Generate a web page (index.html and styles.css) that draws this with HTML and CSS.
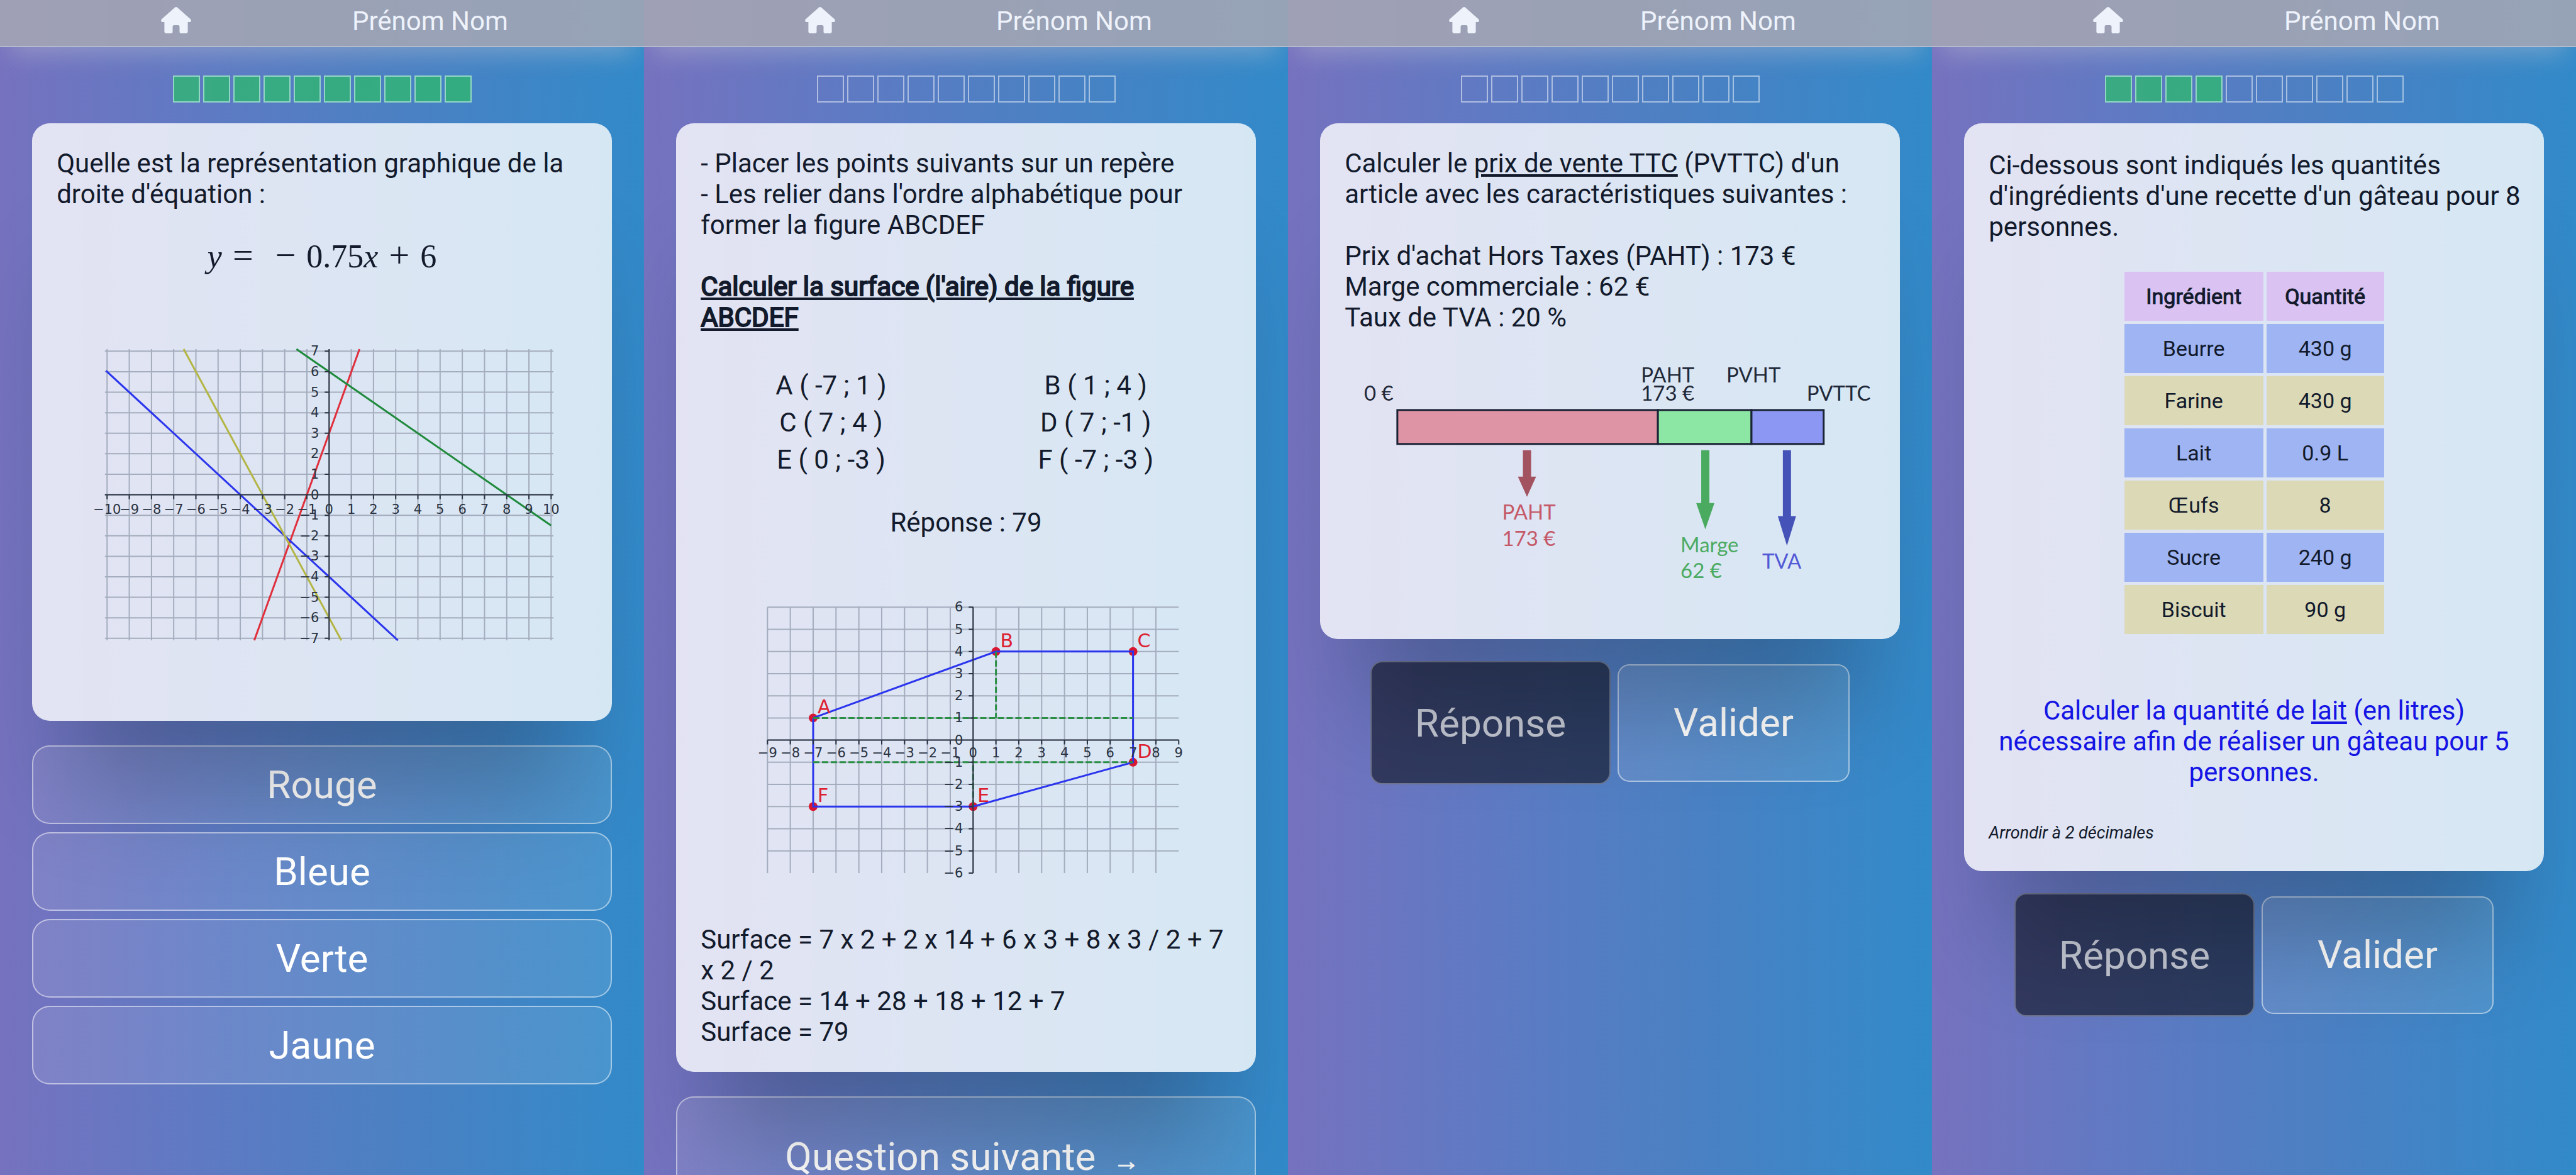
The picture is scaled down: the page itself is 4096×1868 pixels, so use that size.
FILE: index.html
```
<!DOCTYPE html>
<html lang="fr">
<head>
<meta charset="utf-8">
<title>Exercices de mathématiques</title>
<link rel="stylesheet" href="styles.css">
</head>
<body>
<main class="screens">

<section class="screen">
  <header class="topbar">
    <a class="home" href="#" aria-label="Accueil"><svg viewBox="0 0 48 42"><path d="M22.2 .8 Q24 -.6 25.8 .8 L47 19.4 Q49 22 46.5 24 L42.600 24 V39 Q42.600 42 39.600 42 H32 Q29.500 42 29.500 39.500 V31.500 Q29.500 29 27 29 H21 Q18.500 29 18.500 31.500 V39.500 Q18.500 42 16 42 H8.400 Q5.400 42 5.400 39 V24 L1.500 24 Q-1 22 1 19.400 Z"/></svg></a>
    <span class="user">Prénom Nom</span>
  </header>
  <ol class="progress" aria-label="Progression"><li class="done"></li><li class="done"></li><li class="done"></li><li class="done"></li><li class="done"></li><li class="done"></li><li class="done"></li><li class="done"></li><li class="done"></li><li class="done"></li></ol>
  <article class="card">
    <p>Quelle est la représentation graphique de la droite d'équation :</p>
    <div class="formula"><i>y</i><b>=</b><b class="minus">−</b><span>0.75<i>x</i></span><b>+</b><span>6</span></div>
    <svg class="plot plot-lines" id="plot1" viewBox="90 530 845 500" role="img" aria-label="Quatre droites"></svg>
  </article>
  <div class="choices">
    <button class="glass">Rouge</button>
    <button class="glass">Bleue</button>
    <button class="glass">Verte</button>
    <button class="glass">Jaune</button>
  </div>
</section>

<section class="screen">
  <header class="topbar">
    <a class="home" href="#" aria-label="Accueil"><svg viewBox="0 0 48 42"><path d="M22.2 .8 Q24 -.6 25.8 .8 L47 19.4 Q49 22 46.5 24 L42.600 24 V39 Q42.600 42 39.600 42 H32 Q29.500 42 29.500 39.500 V31.500 Q29.500 29 27 29 H21 Q18.500 29 18.500 31.500 V39.500 Q18.500 42 16 42 H8.400 Q5.400 42 5.400 39 V24 L1.500 24 Q-1 22 1 19.400 Z"/></svg></a>
    <span class="user">Prénom Nom</span>
  </header>
  <ol class="progress" aria-label="Progression"><li></li><li></li><li></li><li></li><li></li><li></li><li></li><li></li><li></li><li></li></ol>
  <article class="card">
    <p>- Placer les points suivants sur un repère<br>- Les relier dans l'ordre alphabétique pour former la figure ABCDEF</p>
    <p class="task">Calculer la surface (l'aire) de la figure ABCDEF</p>
    <table class="points">
      <tr><td>A ( -7 ; 1 )</td><td>B ( 1 ; 4 )</td></tr>
      <tr><td>C ( 7 ; 4 )</td><td>D ( 7 ; -1 )</td></tr>
      <tr><td>E ( 0 ; -3 )</td><td>F ( -7 ; -3 )</td></tr>
    </table>
    <p class="result">Réponse : 79</p>
    <svg class="plot plot-figure" id="plot2" viewBox="90 940 845 460" role="img" aria-label="Figure ABCDEF"></svg>
    <p>Surface = 7 x 2 + 2 x 14 + 6 x 3 + 8 x 3 / 2 + 7 x 2 / 2<br>Surface = 14 + 28 + 18 + 12 + 7<br>Surface = 79</p>
  </article>
  <div class="choices">
    <button class="glass next">Question suivante <span class="arrow">→</span></button>
  </div>
</section>

<section class="screen">
  <header class="topbar">
    <a class="home" href="#" aria-label="Accueil"><svg viewBox="0 0 48 42"><path d="M22.2 .8 Q24 -.6 25.8 .8 L47 19.4 Q49 22 46.5 24 L42.600 24 V39 Q42.600 42 39.600 42 H32 Q29.500 42 29.500 39.500 V31.500 Q29.500 29 27 29 H21 Q18.500 29 18.500 31.500 V39.500 Q18.500 42 16 42 H8.400 Q5.400 42 5.400 39 V24 L1.500 24 Q-1 22 1 19.400 Z"/></svg></a>
    <span class="user">Prénom Nom</span>
  </header>
  <ol class="progress" aria-label="Progression"><li></li><li></li><li></li><li></li><li></li><li></li><li></li><li></li><li></li><li></li></ol>
  <article class="card">
    <p>Calculer le <u>prix de vente TTC</u> (PVTTC) d'un article avec les caractéristiques suivantes :</p>
    <p class="spaced">Prix d'achat Hors Taxes (PAHT) : 173 €<br>Marge commerciale : 62 €<br>Taux de TVA : 20 %</p>
    <svg class="plot plot-price" viewBox="90 580 845 350" role="img" aria-label="Décomposition du prix de vente">
      <g class="ink">
        <text x="121" y="637">0 €</text>
        <text x="562" y="608">PAHT</text>
        <text x="562" y="637">173 €</text>
        <text x="698" y="608">PVHT</text>
        <text x="826" y="637">PVTTC</text>
      </g>
      <g stroke="#1b2435" stroke-width="3">
        <rect x="174" y="652" width="415" height="54" fill="#df94a5"/>
        <rect x="589" y="652" width="149" height="54" fill="#8ce7a4"/>
        <rect x="738" y="652" width="115" height="54" fill="#8b97f2"/>
      </g>
      <path fill="#a35260" d="M374 716H387V758H395L380.500 790 366 758H374Z"/>
      <path fill="#49aa60" d="M658 716H671V800H679L664.500 842 650 800H658Z"/>
      <path fill="#4553b8" d="M788 716H801V821H809L794.500 868 780 821H788Z"/>
      <g fill="#c55968"><text x="341" y="826">PAHT</text><text x="341" y="868">173 €</text></g>
      <g fill="#4cab62"><text x="625" y="878">Marge</text><text x="625" y="920">62 €</text></g>
      <g fill="#5259d6"><text x="755" y="905">TVA</text></g>
    </svg>
  </article>
  <form class="answer">
    <input class="field" type="text" placeholder="Réponse" aria-label="Réponse">
    <button class="glass submit" type="button">Valider</button>
  </form>
</section>

<section class="screen">
  <header class="topbar">
    <a class="home" href="#" aria-label="Accueil"><svg viewBox="0 0 48 42"><path d="M22.2 .8 Q24 -.6 25.8 .8 L47 19.4 Q49 22 46.5 24 L42.600 24 V39 Q42.600 42 39.600 42 H32 Q29.500 42 29.500 39.500 V31.500 Q29.500 29 27 29 H21 Q18.500 29 18.500 31.500 V39.500 Q18.500 42 16 42 H8.400 Q5.400 42 5.400 39 V24 L1.500 24 Q-1 22 1 19.400 Z"/></svg></a>
    <span class="user">Prénom Nom</span>
  </header>
  <ol class="progress" aria-label="Progression"><li class="done"></li><li class="done"></li><li class="done"></li><li class="done"></li><li></li><li></li><li></li><li></li><li></li><li></li></ol>
  <article class="card card-recipe">
    <p class="intro">Ci-dessous sont indiqués les quantités d'ingrédients d'une recette d'un gâteau pour 8 personnes.</p>
    <table class="recipe">
      <thead><tr><th>Ingrédient</th><th>Quantité</th></tr></thead>
      <tbody>
        <tr><td>Beurre</td><td>430 g</td></tr>
        <tr><td>Farine</td><td>430 g</td></tr>
        <tr><td>Lait</td><td>0.9 L</td></tr>
        <tr><td>Œufs</td><td>8</td></tr>
        <tr><td>Sucre</td><td>240 g</td></tr>
        <tr><td>Biscuit</td><td>90 g</td></tr>
      </tbody>
    </table>
    <p class="question">Calculer la quantité de <u>lait</u> (en litres) nécessaire afin de réaliser un gâteau pour 5 personnes.</p>
    <p class="note">Arrondir à 2 décimales</p>
  </article>
  <form class="answer">
    <input class="field" type="text" placeholder="Réponse" aria-label="Réponse">
    <button class="glass submit" type="button">Valider</button>
  </form>
</section>

</main>
<script src="plots.js"></script>
</body>
</html>
```
FILE: styles.css
```
* { box-sizing: border-box; }
body {
  margin: 0;
  font-family: Roboto, "DejaVu Sans", sans-serif;
  font-size: 42px;
  line-height: 49px;
  color: #121a2b;
}
.screens {
  display: grid;
  grid-template-columns: repeat(4, 1fr);
  height: 100vh;
  overflow: hidden;
}
.screen {
  position: relative;
  overflow: hidden;
  background: linear-gradient(90deg, #7672bf 0%, #5e7ac3 32%, #4c80c3 60%, #328ac9 100%);
}

/* top bar */
.topbar {
  display: flex;
  align-items: flex-start;
  height: 75px;
  padding-left: 25%;
  background: rgba(165, 166, 179, .87);
  border-bottom: 2px solid #b2bacd;
  box-shadow: 0 24px 40px -16px rgba(200, 200, 210, .45);
}
.home { width: 48px; height: 42px; margin-top: 11px; }
.home svg { display: block; width: 48px; height: 42px; fill: #eef2fb; overflow: visible; }
.user { margin: 9px 0 0 256px; color: #eef2fb; }

/* progress squares */
.progress {
  display: flex;
  justify-content: center;
  gap: 5px;
  margin: 45px 0 33px;
  padding: 0;
  list-style: none;
}
.progress li { width: 43px; height: 43px; border: 2px solid rgba(255, 255, 255, .5); }
.progress .done {
  border-color: #94d6c6;
  background: rgba(48, 182, 112, .8);
  background-clip: padding-box;
}

/* question card */
.card {
  position: relative;
  z-index: 1;
  margin: 0 5%;
  padding: 39px;
  border-radius: 28px;
  background: rgba(255, 255, 255, .8);
  box-shadow: 0 170px 150px -60px rgba(0, 0, 0, .22);
}
.card p { margin: 0; }
.card .spaced, .card .task { margin-top: 49px; }
.task { -webkit-text-stroke: 2px currentColor; text-decoration: underline; }
.card .result { margin-top: 45px; text-align: center; }

.formula {
  display: flex;
  justify-content: center;
  align-items: baseline;
  gap: 17px;
  height: 58px;
  margin-top: 44px;
  font: 52px/58px "Liberation Serif", serif;
}
.formula b { font-size: 58px; font-weight: 400; }
.formula .minus { margin-left: 18px; }

.plot { display: block; width: 100%; }
.plot text { font-family: "DejaVu Sans", sans-serif; font-size: 21px; fill: #2a3342; }
.plot .mid { text-anchor: middle; }
.plot .end { text-anchor: end; }
.plot .name { font-size: 30px; fill: #dc2030; }
.plot-lines { margin: 96px 0 77px; }
.plot-figure { margin: 85px 0 70px; }
.plot-price { margin: 51px 0 48px; }
.plot-price text { font-family: Lato, sans-serif; font-size: 33px; fill: inherit; }
.plot-price .ink { fill: #1f2838; }
.grid { stroke: #a4adbd; stroke-width: 2; }
.axis { stroke: #2a3342; stroke-width: 2; }
.curve { fill: none; stroke-width: 3; }

.points {
  width: 100%;
  margin-top: 53px;
  border-spacing: 2px;
  text-align: center;
}
.points td { padding: 4px; }

.card-recipe { padding-top: 42px; }
.card .intro { margin-right: -10px; }
.recipe {
  width: 423px;
  margin: 42px auto 0;
  border-spacing: 5px;
  font-size: 34px;
  text-align: center;
}
.recipe th, .recipe td { height: 78px; padding: 0; }
.recipe th { background: #dac3f2; font-weight: 400; -webkit-text-stroke: 1px currentColor; }
.recipe td { background: #dcd9b7; }
.recipe tr:nth-child(odd) td { background: #9fb4f2; }
.card .question { margin-top: 92px; color: #1414e4; text-align: center; }
.card .note { margin-top: 50px; font-size: 27px; line-height: 44px; font-style: italic; }

/* answers */
.choices { display: grid; gap: 13px; margin: 39px 5% 0; }
.glass, .field {
  font: 62px/74px Roboto, "DejaVu Sans", sans-serif;
  text-align: center;
  border: 2px solid rgba(255, 255, 255, .5);
}
.glass {
  height: 125px;
  padding: 0;
  color: #fff;
  background: rgba(255, 255, 255, .1);
  border-radius: 28px;
}
.next { height: 192px; }
.arrow { margin: 0 12px; font: 42px "Liberation Serif", serif; -webkit-text-stroke: 1px currentColor; }
.answer {
  display: flex;
  justify-content: center;
  align-items: center;
  gap: 11px;
  margin-top: 35px;
}
.field {
  width: 382px;
  height: 196px;
  border-color: rgba(255, 255, 255, .3);
  border-radius: 19px;
  background: rgba(26, 32, 52, .7);
  color: #d0d3de;
}
.field::placeholder { color: #c4c8d4; opacity: 1; }
.submit { width: 369px; height: 187px; border-radius: 19px; }
```
FILE: plots.js
```
const f = n => n < 0 ? '−' + -n : '' + n;

// Draws grid lines, axes, ticks and tick labels for one plot.
function frame(o) {
  const X = v => o.x0 + v * o.ux, Y = v => o.y0 - v * o.uy;
  let grid = '', axis = '', labels = '';
  for (let v = -o.nx; v <= o.nx; v++) {
    if (v < o.nx || !o.open) grid += `M${X(v)} ${Y(o.ny + o.over)}V${Y(-o.ny - o.over)}`;
    axis += `M${X(v)} ${Y(0)}v7`;
    labels += `<text class="mid" x="${X(v)}" y="${o.labelY}">${f(v)}</text>`;
  }
  for (let v = -o.ny; v <= o.ny; v++) {
    if (v > -o.ny || !o.open) grid += `M${X(-o.nx - o.over)} ${Y(v)}H${X(o.nx + o.over)}`;
    axis += `M${X(0)} ${Y(v)}h-7`;
    labels += `<text class="end" x="${o.x0 - 16}" y="${Y(v) + 7}">${f(v)}</text>`;
  }
  axis += `M${X(-o.nx - o.over)} ${Y(0)}H${X(o.nx + o.over)}M${X(0)} ${Y(o.ny + o.over)}V${Y(-o.ny - o.over)}`;
  const line = (pts, color, extra = '') =>
    `<polyline class="curve" stroke="${color}" ${extra} points="${pts.map(p => X(p[0]) + ',' + Y(p[1])).join(' ')}"/>`;
  return { X, Y, line, grid: `<path class="grid" d="${grid}"/>`, axis: `<path class="axis" d="${axis}"/>${labels}` };
}

const a = frame({ x0: 524, y0: 786, ux: 35.36, uy: 32.66, nx: 10, ny: 7, over: .1, labelY: 816 });
document.getElementById('plot1').innerHTML = a.grid +
  a.line([[-3.37, -7.1], [1.37, 7.1]], '#e02f3d') +
  a.line([[-10.05, 6.05], [3.1, -7.1]], '#2b35ee') +
  a.line([[-1.47, 7.1], [10, -1.5]], '#1f8a3c') +
  a.line([[-6.55, 7.1], [.55, -7.1]], '#b3b544') + a.axis;

const b = frame({ x0: 524, y0: 1177, ux: 36.39, uy: 35.27, nx: 9, ny: 6, over: 0, open: true, labelY: 1204 });
const pts = { A: [-7, 1], B: [1, 4], C: [7, 4], D: [7, -1], E: [0, -3], F: [-7, -3] };
const list = Object.entries(pts);
document.getElementById('plot2').innerHTML = b.grid +
  list.map(([, p]) => `<circle cx="${b.X(p[0])}" cy="${b.Y(p[1])}" r="7" fill="#d81830"/>`).join('') +
  b.line([...list.map(e => e[1]), pts.A], '#2b35ee') +
  [[[-7, 1], [7, 1]], [[-7, -1], [7, -1]], [[1, 4], [1, 1]], [[0, -3], [0, -1]]]
    .map(s => b.line(s, '#2a8f45', 'stroke-dasharray="10 4"')).join('') + b.axis +
  list.map(([n, p]) => `<text class="name" x="${b.X(p[0]) + 7}" y="${b.Y(p[1]) - 7}">${n}</text>`).join('');
```
